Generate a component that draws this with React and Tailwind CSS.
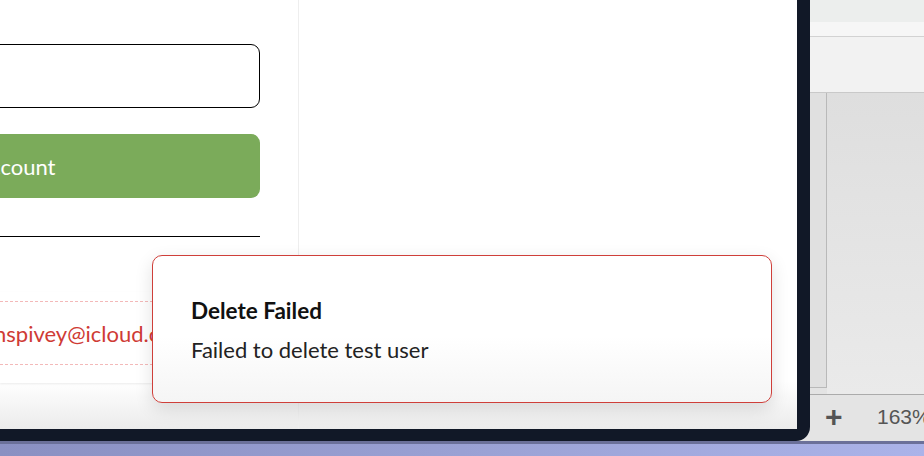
export default function App() {
    return (
        <div className="w-[924px] h-[456px] overflow-hidden flex flex-col bg-[#e3e3e3]" style={{ fontFamily: 'Lato, "Noto Sans", sans-serif' }}>
            <div className="flex h-[441px] relative">
                {/* host app behind, on the right */}
                <div className="absolute right-0 top-0 bottom-0 w-[124px] flex flex-col overflow-hidden" style={{ fontFamily: '"Liberation Sans", Arial, sans-serif' }}>
                    <div className="h-[22px] bg-[#eceeed]" />
                    <div className="h-[15px] bg-[#f6f6f6] border-b border-[#d2d2d2]" />
                    <div className="h-[56px] bg-[#f2f2f2] border-b border-[#c9c9c9]" />
                    <div className="flex-1 flex">
                        <div className="w-[27px] bg-[#e0e0e0] border-r border-[#b9b9b9] border-b mb-[6px]" />
                        <div className="flex-1 bg-[linear-gradient(to_bottom,#dedede,#eaeaea)]" />
                    </div>
                    <div className="h-[47px] border-t border-[#ababab] bg-[#e4e4e4] flex items-center pl-[25px] pb-[2px] text-[#555] whitespace-nowrap">
                        <span className="shrink-0 text-[30px] font-bold leading-none w-[52px]">+</span>
                        <span className="shrink-0 text-[21px]">163%</span>
                    </div>
                </div>

                {/* main window */}
                <div className="relative w-[810px] h-[441px] bg-[#111827] rounded-br-[14px] pr-[13px] pb-[12px]">
                    <div className="w-[797px] h-[429px] flex relative bg-[linear-gradient(to_bottom,#ffffff_89%,#ebebeb)] overflow-hidden">
                        <div className="w-[299px] border-r border-[#eeeeee] overflow-hidden flex flex-col">
                            <div className="-ml-[300px] w-[560px] flex flex-col">
                                <div className="mt-[44px] h-[64px] border border-black rounded-[9px] bg-white" />
                                <div className="mt-[26px] h-[64px] rounded-[9px] bg-[#7bab5a] flex items-center justify-center text-white text-[22px] pl-[2px]">
                                    Create Account
                                </div>
                                <div className="mt-[38px] h-px bg-black" />
                            </div>
                            <div className="mt-[55px] h-[91px] bg-white shadow-[0_1px_2px_rgba(0,0,0,0.08)] flex flex-col">
                                <div className="mt-[9px] border-t border-dashed border-[#f3b9b9]" />
                                <div className="h-[62px] flex items-center -ml-[6px] text-[22px] text-[#cf3b35] whitespace-nowrap">
                                    nspivey@icloud.com
                                </div>
                                <div className="border-t border-dashed border-[#f3b9b9]" />
                            </div>
                        </div>
                        <div className="flex-1" />

                        {/* toast */}
                        <div className="absolute left-[152px] top-[255px] w-[620px] h-[148px] rounded-[10px] border border-[#cf3f3a] bg-[linear-gradient(to_bottom,#ffffff_55%,#f5f5f5)] shadow-[0_6px_18px_rgba(0,0,0,0.12)] pl-[38px] pt-[41px]">
                            <div className="text-[22.5px] leading-[28px] font-bold text-[#111]">Delete Failed</div>
                            <div className="mt-[11px] text-[22px] leading-[28px] text-[#222]">Failed to delete test user</div>
                        </div>
                    </div>
                </div>
            </div>
            <div className="h-[15px] border-t-[3px] border-[#6b7099] bg-[linear-gradient(to_right,#8a90c2,#9aa1d4_50%,#abb3e9)]" />
        </div>
    );
}
